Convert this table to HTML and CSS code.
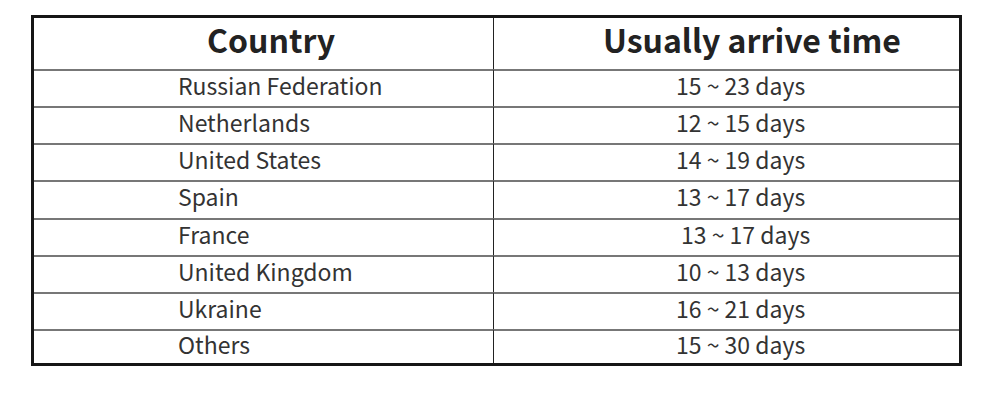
FILE: index.html
```html
<!DOCTYPE html>
<html>
<head>
<meta charset="utf-8">
<link rel="stylesheet" href="styles.css">
</head>
<body>
<table class="ship">
  <colgroup><col class="c1"><col class="c2"></colgroup>
  <thead>
    <tr><th class="h-country">Country</th><th class="h-time">Usually arrive time</th></tr>
  </thead>
  <tbody>
    <tr><td class="country">Russian Federation</td><td class="time">15 ~ 23 days</td></tr>
    <tr><td class="country">Netherlands</td><td class="time">12 ~ 15 days</td></tr>
    <tr><td class="country">United States</td><td class="time">14 ~ 19 days</td></tr>
    <tr class="tall"><td class="country">Spain</td><td class="time">13 ~ 17 days</td></tr>
    <tr><td class="country">France</td><td class="time shift">13 ~ 17 days</td></tr>
    <tr><td class="country">United Kingdom</td><td class="time">10 ~ 13 days</td></tr>
    <tr><td class="country">Ukraine</td><td class="time">16 ~ 21 days</td></tr>
    <tr class="last"><td class="country">Others</td><td class="time">15 ~ 30 days</td></tr>
  </tbody>
</table>
</body>
</html>
```
FILE: styles.css
```css
html, body {
  margin: 0;
  padding: 0;
  background: #ffffff;
}
body {
  padding: 15px 0 0 31px;
  font-family: "Noto Sans CJK SC", "Noto Sans", sans-serif;
  color: #333;
}
.ship {
  border-collapse: separate;
  border-spacing: 0;
  table-layout: fixed;
  width: 931px;
  border: 3px solid #161616;
}
.c1 { width: 460px; }
.c2 { width: 465px; }
.ship th, .ship td {
  padding: 0;
  text-align: left;
  white-space: nowrap;
  box-sizing: border-box;
}
.ship th {
  height: 51px;
  font-size: 32px;
  font-weight: 700;
  color: #222;
  line-height: 1;
  vertical-align: middle;
  padding-bottom: 9px;
}
.ship th:first-child, .ship td:first-child {
  border-right: 1px solid #222;
}
.ship .h-country { padding-left: 173px; }
.ship .h-time { padding-left: 109px; }
.ship td {
  border-top: 2px solid #777;
  height: 37px;
  font-size: 23px;
  line-height: 1;
  vertical-align: middle;
  padding-bottom: 7px;
}
.ship tr.tall td { height: 38px; }
.ship tr.last td { height: 34px; padding-bottom: 5px; }
.ship .country { padding-left: 144px; }
.ship .time { padding-left: 182px; }
.ship .time.shift { padding-left: 187px; }
```
